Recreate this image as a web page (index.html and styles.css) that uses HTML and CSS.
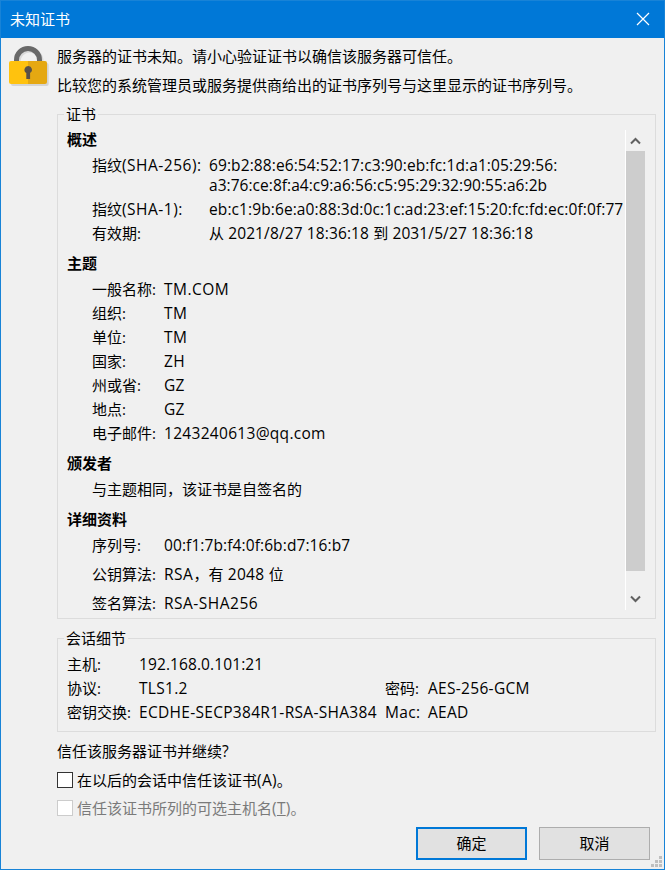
FILE: index.html
```html
<!DOCTYPE html>
<html lang="zh-CN">
<head>
<meta charset="utf-8">
<title>未知证书</title>
<link rel="stylesheet" href="styles.css">
</head>
<body>
<div class="window">
  <header class="titlebar">
    <h1>未知证书</h1>
    <svg class="close" width="14" height="14" viewBox="0 0 14 14"><path d="M1 1 13 13M13 1 1 13" stroke="#fff" stroke-width="1.2" fill="none"/></svg>
  </header>
  <main class="body">
    <svg class="lock" width="42" height="42" viewBox="0 0 42 42">
      <path d="M9 18V15.500a11.500 11.500 0 0 1 23 0V18" fill="none" stroke="#d9d9d9" stroke-width="5"/>
      <rect x="2" y="17" width="37.700" height="23" rx="2" fill="#d4d4d4"/>
      <path d="M7.500 17V14a11.500 11.500 0 0 1 23 0V17" fill="none" stroke="#696969" stroke-width="5"/>
      <path d="M2 15H19V38H2a2 2 0 0 1-2-2V17a2 2 0 0 1 2-2Z" fill="#ffc20e"/>
      <path d="M19 15H36a2 2 0 0 1 2 2V36a2 2 0 0 1-2 2H19Z" fill="#e5a812"/>
      <path d="M19.300 20a3.700 3.700 0 0 1 1.800 6.900V33h-3.800v-6.100a3.700 3.700 0 0 1 2-6.900Z" fill="#595148"/>
    </svg>
    <div class="content">
      <p class="intro">服务器的证书未知。请小心验证证书以确信该服务器可信任。</p>
      <p class="intro">比较您的系统管理员或服务提供商给出的证书序列号与这里显示的证书序列号。</p>

      <section class="group certificate">
        <h2 class="legend">证书</h2>
        <div class="scrollview">
          <div class="details">
            <h3>概述</h3>
            <dl class="wide">
              <dt>指纹<span class="lt caps">(SHA-256):</span></dt><dd class="lt hex">69:b2:88:e6:54:52:17:c3:90:eb:fc:1d:a1:05:29:56:<br><span class="tight">a3:76:ce:8f:a4:c9:a6:56:c5:95:29:32:90:55:a6:2b</span></dd>
              <dt>指纹<span class="lt caps">(SHA-1):</span></dt><dd class="lt hex">eb:c1:9b:6e:a0:88:3d:0c:1c:ad:23:ef:15:20:fc:fd:ec:0f:0f:77</dd>
              <dt>有效期:</dt><dd>从<span class="lt date"> 2021/8/27 18:36:18 </span>到<span class="lt date"> 2031/5/27 18:36:18</span></dd>
            </dl>
            <h3>主题</h3>
            <dl>
              <dt>一般名称:</dt><dd class="lt caps">TM.COM</dd>
              <dt>组织:</dt><dd class="lt caps">TM</dd>
              <dt>单位:</dt><dd class="lt caps">TM</dd>
              <dt>国家:</dt><dd class="lt caps">ZH</dd>
              <dt>州或省:</dt><dd class="lt">GZ</dd>
              <dt>地点:</dt><dd class="lt">GZ</dd>
              <dt>电子邮件:</dt><dd class="lt">1243240613@qq.com</dd>
            </dl>
            <h3>颁发者</h3>
            <p class="issuer">与主题相同，该证书是自签名的</p>
            <h3>详细资料</h3>
            <dl class="loose">
              <dt>序列号:</dt><dd class="lt hex">00:f1:7b:f4:0f:6b:d7:16:b7</dd>
              <dt>公钥算法:</dt><dd><span class="lt caps">RSA</span>，有<span class="lt"> 2048 </span>位</dd>
              <dt>签名算法:</dt><dd class="lt caps">RSA-SHA256</dd>
            </dl>
          </div>
          <div class="scrollbar">
            <svg width="19" height="21" viewBox="0 0 19 21"><path d="M5 13.500 9.500 9l4.500 4.500" fill="none" stroke="#606060" stroke-width="2"/></svg>
            <div class="thumb"></div>
            <svg class="down" width="19" height="21" viewBox="0 0 19 21"><path d="M5 7.500 9.500 12 14 7.500" fill="none" stroke="#606060" stroke-width="2"/></svg>
          </div>
        </div>
      </section>

      <section class="group session">
        <h2 class="legend">会话细节</h2>
        <div class="session-grid">
          <span>主机:</span><span class="lt hex">192.168.0.101:21</span><span></span><span></span>
          <span>协议:</span><span class="lt">TLS1.2</span><span>密码:</span><span class="lt">AES-256-GCM</span>
          <span>密钥交换:</span><span class="lt">ECDHE-SECP384R1-RSA-SHA384</span><span class="lt">Mac:</span><span class="lt">AEAD</span>
        </div>
      </section>

      <p class="question">信任该服务器证书并继续<span class="lt">?</span></p>
      <div class="check"><i class="box"></i><span>在以后的会话中信任该证书<span class="lt">(A)</span>。</span></div>
      <div class="check disabled"><i class="box"></i><span>信任该证书所列的可选主机名<span class="lt">(<u>T</u>)</span>。</span></div>
      <div class="actions">
        <button class="primary">确定</button>
        <button>取消</button>
      </div>
    </div>
  </main>
  <svg class="grip" width="11" height="11" viewBox="0 0 11 11" fill="#bfbfbf"><path d="M8 0h3v3H8zM4 4h3v3H4zM8 4h3v3H8zM0 8h3v3H0zM4 8h3v3H4zM8 8h3v3H8z"/></svg>
</div>
</body>
</html>
```

FILE: styles.css
```css
* { box-sizing: border-box; margin: 0; padding: 0; }
body {
  font: 15px/20px "Open Sans", "Noto Sans CJK SC", sans-serif;
  color: #000;
  background: #f0f0f0;
}
svg { display: block; flex: none; }
.window {
  position: relative;
  width: 665px;
  height: 870px;
  border: 1px solid #1883d7;
  background: #f0f0f0;
  overflow: hidden;
  white-space: nowrap;
}
.lt { font-size: 15.5px; letter-spacing: 0.3px; white-space: pre; }
.caps { letter-spacing: 0.5px; }
.hex { letter-spacing: 0.1px; }
.tight { letter-spacing: 0.04px; }
.date { letter-spacing: 0.12px; }
p .lt, dt .lt, dd .lt, .check .lt { line-height: 1; }
.titlebar {
  display: flex;
  justify-content: space-between;
  align-items: center;
  height: 37px;
  padding: 0 14px 2px 9px;
  background: #0078d7;
  color: #fff;
}
.titlebar h1 { font-size: 15px; font-weight: 400; }
.body { display: flex; padding: 8px 8px 0; }
.lock { margin-right: 6px; }
.content { flex: 1; }
.intro { height: 20px; margin-bottom: 9px; }
.group { position: relative; border: 1px solid #dcdcdc; }
.legend {
  position: absolute;
  top: -11px;
  left: 6px;
  padding: 0 2px;
  background: #f0f0f0;
  font-size: 15px;
  font-weight: 400;
}
.certificate { height: 505px; margin-top: 19px; padding: 14px 10px 0 9px; }
.scrollview { display: flex; justify-content: space-between; height: 488px; }
h3 { height: 20px; font-size: 15px; font-weight: 700; margin-bottom: 6px; }
dl + h3, .issuer + h3 { margin-top: 10px; }
dl { display: grid; grid-template-columns: 72px auto; grid-auto-rows: 20px; row-gap: 4px; padding-left: 25px; }
dl.wide { grid-template-columns: 117px auto; grid-template-rows: 40px; }
dl.loose { row-gap: 9px; }
.issuer { height: 20px; padding-left: 25px; }
.scrollbar { width: 20px; height: 480px; margin-top: 1px; border-left: 1px solid #fff; flex: none; }
.thumb { height: 420px; background: #cdcdcd; }
.down { margin-top: 18px; }
.session { height: 94px; margin-top: 19px; padding: 15px 9px 0; }
.session-grid { display: grid; grid-template-columns: 72px 246px 43px auto; grid-auto-rows: 20px; row-gap: 4px; }
.question { height: 20px; margin: 9px 0; }
.check { display: flex; align-items: center; gap: 4px; height: 20px; margin-bottom: 8px; }
.box { width: 16px; height: 16px; border: 1px solid #333; background: #fff; }
.disabled { color: #7a7a7a; }
.disabled .box { border-color: #ccc; }
.actions { display: flex; justify-content: flex-end; gap: 12px; margin-top: 9px; padding-right: 6px; }
button {
  width: 111px;
  height: 33px;
  padding-bottom: 2px;
  border: 1px solid #adadad;
  background: #e1e1e1;
  color: #000;
  font: inherit;
}
.primary { border: 2px solid #0078d7; }
.grip { position: absolute; right: 2px; bottom: 2px; }
```
